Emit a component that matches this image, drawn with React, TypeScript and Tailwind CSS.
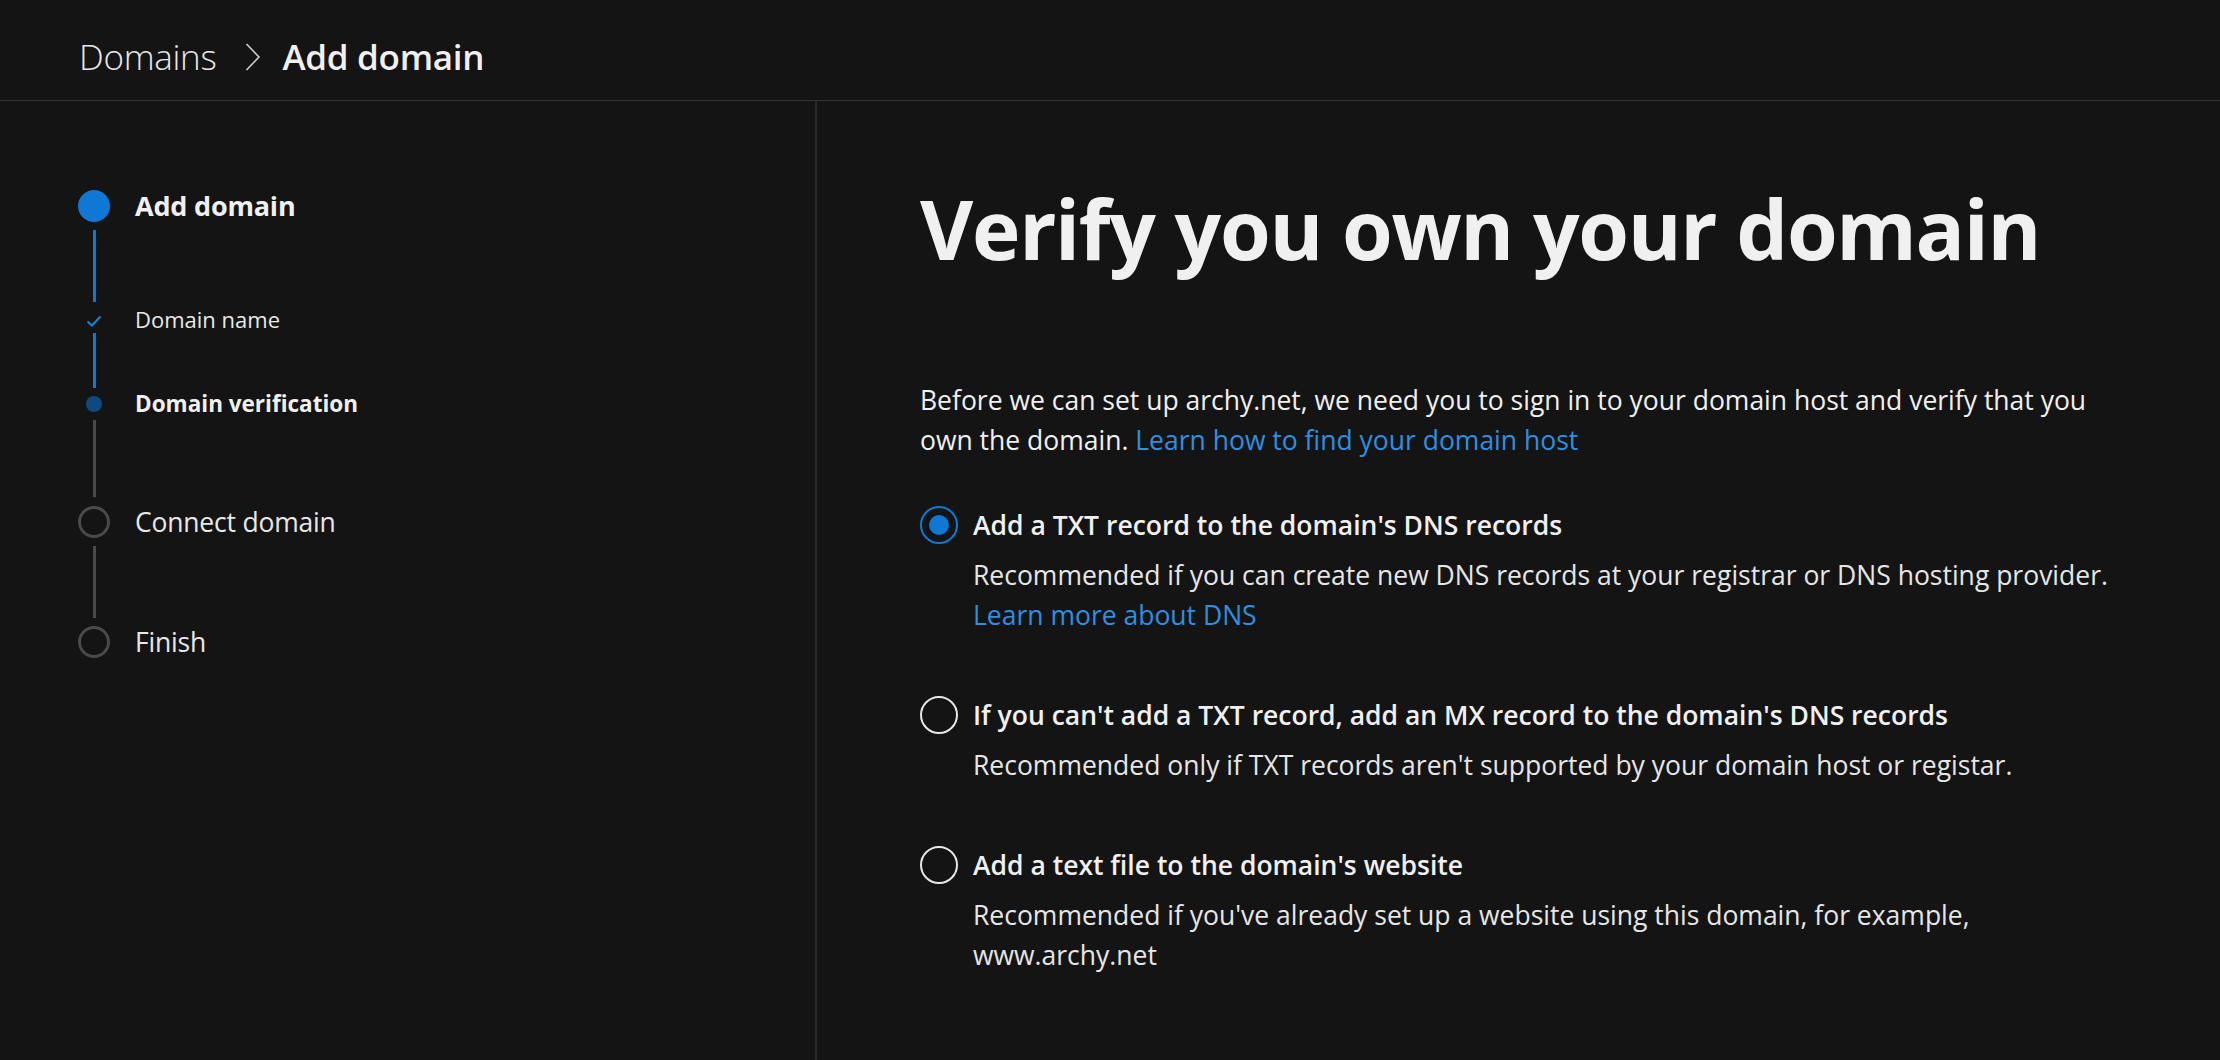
import React, { useState } from 'react';

const font = { fontFamily: '"Open Sans", "Noto Sans", sans-serif' };

function Connector({ active, height, mt }: { active: boolean; height: string; mt: string }) {
    return (
        <div className={`flex w-8 justify-center ${mt}`}>
            <div className={`w-[3px] ${height} ${active ? 'bg-[#0f78d4]' : 'bg-[#4a4a4a]'}`} />
        </div>
    );
}

function Steps() {
    return (
        <div className="flex flex-col pl-[78px] pt-[89px]">
            {/* Add domain */}
            <div className="flex h-8 items-center gap-[25px]">
                <div className="h-8 w-8 shrink-0 rounded-full bg-[#0f78d4]" />
                <span className="text-[27px] font-bold tracking-[-0.2px] text-[#f0f0f0]">Add domain</span>
            </div>
            <Connector active height="h-[72px]" mt="mt-2" />

            {/* Domain name */}
            <div className="mt-[7px] flex h-6 items-center gap-[25px]">
                <div className="flex w-8 shrink-0 justify-center">
                    <svg width="16" height="12" viewBox="0 0 16 12" fill="none">
                        <path d="M1.5 6.5 L6 10.5 L14.5 1.5" stroke="#1e80d8" strokeWidth="2" />
                    </svg>
                </div>
                <span className="-mt-[4px] text-[22px] text-[#e8e8e8]">Domain name</span>
            </div>
            <Connector active height="h-[55px]" mt="mt-0" />

            {/* Domain verification */}
            <div className="mt-2 flex h-4 items-center gap-[25px]">
                <div className="flex w-8 shrink-0 justify-center">
                    <div className="h-4 w-4 rounded-full bg-[#0e4a80]" />
                </div>
                <span className="text-[22.5px] font-bold text-[#f0f0f0]">Domain verification</span>
            </div>
            <Connector active={false} height="h-[77px]" mt="mt-2" />

            {/* Connect domain */}
            <div className="mt-[9px] flex h-8 items-center gap-[25px]">
                <div className="h-8 w-8 shrink-0 rounded-full border-[3px] border-[#4a4a4a]" />
                <span className="mt-[2px] text-[26.5px] tracking-[-0.2px] text-[#e8e8e8]">Connect domain</span>
            </div>
            <Connector active={false} height="h-[72px]" mt="mt-2" />

            {/* Finish */}
            <div className="mt-2 flex h-8 items-center gap-[25px]">
                <div className="h-8 w-8 shrink-0 rounded-full border-[3px] border-[#4a4a4a]" />
                <span className="mt-[2px] text-[26.5px] tracking-[-0.2px] text-[#e8e8e8]">Finish</span>
            </div>
        </div>
    );
}

const options = [
    {
        id: 'txt',
        title: "Add a TXT record to the domain's DNS records",
        desc: 'Recommended if you can create new DNS records at your registrar or DNS hosting provider.',
        link: 'Learn more about DNS',
    },
    {
        id: 'mx',
        title: "If you can't add a TXT record, add an MX record to the domain's DNS records",
        desc: "Recommended only if TXT records aren't supported by your domain host or registar.",
    },
    {
        id: 'file',
        title: "Add a text file to the domain's website",
        desc: "Recommended if you've already set up a website using this domain, for example, www.archy.net",
    },
];

export default function App() {
    const [selected, setSelected] = useState('txt');

    return (
        <div className="flex h-[1060px] w-[2220px] flex-col overflow-hidden bg-[#141414]" style={font}>
            {/* Header */}
            <div className="flex h-[101px] shrink-0 items-center gap-[29px] border-b border-[#333333] pl-[79px] pt-[14px]">
                <span className="text-[35px] font-light tracking-[-0.3px] text-[#e8e8e8]">Domains</span>
                <svg width="16" height="28" viewBox="0 0 16 28" fill="none">
                    <path d="M1.5 1 L14 14 L1.5 27" stroke="#d0d0d0" strokeWidth="1.6" />
                </svg>
                <span className="-ml-[8px] text-[35px] font-semibold tracking-[-0.3px] text-[#f0f0f0]">Add domain</span>
            </div>

            <div className="flex flex-1">
                <div className="w-[817px] shrink-0 border-r-2 border-[#2a2a2a]">
                    <Steps />
                </div>

                <div className="flex-1 pl-[103px] pr-[96px] pt-[72px]">
                    <h1 className="text-[82px] font-bold leading-[110px] tracking-[-1.3px] text-[#f0f0f0]">
                        Verify you own your domain
                    </h1>

                    <p className="mt-[97px] text-[26.5px] leading-[40px] text-[#f0f0f0]">
                        Before we can set up archy.net, we need you to sign in to your domain host and verify that you
                        own the domain.{' '}
                        <a className="text-[#2f8fe0]">Learn how to find your domain host</a>
                    </p>

                    <div className="mt-[45px] flex flex-col gap-[60px]">
                        {options.map((o) => (
                            <label key={o.id} className="flex cursor-pointer gap-[15px]" onClick={() => setSelected(o.id)}>
                                <div className="flex h-10 shrink-0 items-center">
                                    <div
                                        className={`flex h-[38px] w-[38px] items-center justify-center rounded-full border-2 ${
                                            selected === o.id ? 'border-[#0f78d4]' : 'border-[#e8e8e8]'
                                        }`}
                                    >
                                        {selected === o.id && <div className="h-5 w-5 rounded-full bg-[#0f78d4]" />}
                                    </div>
                                </div>
                                <div className="flex flex-col">
                                    <span className="text-[26.5px] font-semibold leading-[40px] text-[#f0f0f0]">
                                        {o.title}
                                    </span>
                                    <span className="mt-[10px] text-[26.5px] leading-[40px] text-[#e6e6e6]">{o.desc}</span>
                                    {o.link && <a className="text-[26.5px] leading-[40px] text-[#2f8fe0]">{o.link}</a>}
                                </div>
                            </label>
                        ))}
                    </div>
                </div>
            </div>
        </div>
    );
}
